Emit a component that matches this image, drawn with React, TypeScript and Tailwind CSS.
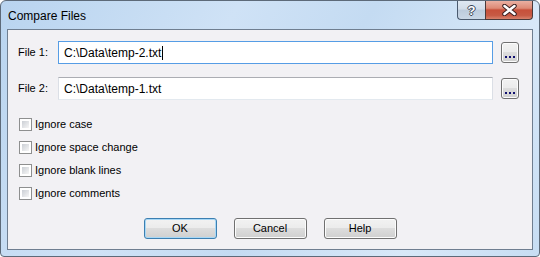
const font = { fontFamily: '"Liberation Sans", Arial, sans-serif' };

function BrowseButton() {
    return (
        <button className="w-[18px] h-[21px] rounded-[3px] border border-[#707070] bg-[linear-gradient(#f2f2f2_0%,#ebebeb_50%,#dddddd_50%,#cfcfcf_100%)] shadow-[inset_0_0_0_1px_#fcfcfc] flex items-end justify-center gap-[2px] pb-[4px]">
            <span className="w-[2px] h-[2px] bg-[#101070]" />
            <span className="w-[2px] h-[2px] bg-[#101070]" />
            <span className="w-[2px] h-[2px] bg-[#101070]" />
        </button>
    );
}

function FileRow({ label, value, focused }: { label: string; value: string; focused?: boolean }) {
    return (
        <div className="flex items-center h-[23px] pl-[10px]">
            <span className="w-[40px] text-[11px] text-black">{label}</span>
            <div
                className={`w-[435px] h-[23px] bg-white border flex items-center pl-[5px] text-[12px] text-black ${
                    focused
                        ? 'border-[#569de5]'
                        : 'border-[#dbdfe6] border-t-[#abadb3] border-b-[#e3e9ef]'
                }`}
            >
                <span>{value}</span>
                {focused && <span className="w-px h-[14px] bg-black ml-px" />}
            </div>
            <div className="ml-[8px]">
                <BrowseButton />
            </div>
        </div>
    );
}

function Check({ label }: { label: string }) {
    return (
        <div className="flex items-center h-[23px] pl-[11px]">
            <span className="w-[13px] h-[13px] border border-[#8e8f8f] bg-white p-[2px]">
                <span className="block w-full h-full bg-[linear-gradient(135deg,#cbcfd5,#f6f6f6)]" />
            </span>
            <span className="ml-[3px] text-[11px] text-black">{label}</span>
        </div>
    );
}

function DlgButton({ label, isDefault }: { label: string; isDefault?: boolean }) {
    return (
        <button
            className={`w-[73px] h-[21px] rounded-[3px] border text-[11px] text-black bg-[linear-gradient(#f2f2f2_0%,#ebebeb_50%,#dddddd_50%,#cfcfcf_100%)] ${
                isDefault
                    ? 'border-[#3c7fb1] shadow-[inset_0_0_0_1px_#a8d8f6]'
                    : 'border-[#707070] shadow-[inset_0_0_0_1px_#fcfcfc]'
            }`}
        >
            {label}
        </button>
    );
}

export default function App() {
    return (
        <div style={font} className="w-[540px] h-[257px] bg-white">
            <div className="w-[540px] h-[257px] rounded-t-[6px] rounded-b-[4px] border border-[#5d6a79] bg-[linear-gradient(120deg,#b9d4ef_0%,#cfe2f6_35%,#c4dbf2_55%,#d8e8f8_80%,#c7ddf3_100%)] flex flex-col overflow-hidden">
                {/* Title bar */}
                <div className="h-[28px] flex items-start shrink-0">
                    <span className="pl-[7px] pt-[6px] text-[12px] text-black">Compare Files</span>
                    <div className="ml-auto mr-[6px] flex">
                        <div className="w-[28px] h-[19px] rounded-bl-[4px] border border-t-0 border-r-0 border-[#4a5a6e] bg-[linear-gradient(#dfe8f2_0%,#d2dde9_45%,#bccbdc_50%,#c9d7e6_100%)] flex items-center justify-center">
                            <span className="text-[13px] font-bold text-white leading-none [text-shadow:1px_0_0_#3a4656,-1px_0_0_#3a4656,0_1px_0_#3a4656,0_-1px_0_#3a4656]">?</span>
                        </div>
                        <div className="w-[48px] h-[19px] rounded-br-[4px] border border-t-0 border-[#4a3a3a] bg-[linear-gradient(#eab0a2_0%,#de8a76_40%,#c7503a_50%,#c75a44_80%,#d8826c_100%)] flex items-center justify-center">
                            <svg width="15" height="12" viewBox="0 0 15 12">
                                <path d="M2.5 2 L12.5 10 M12.5 2 L2.5 10" stroke="#3a2020" strokeWidth="4.5" strokeLinecap="round" />
                                <path d="M2.5 2 L12.5 10 M12.5 2 L2.5 10" stroke="#ffffff" strokeWidth="2.5" strokeLinecap="round" />
                            </svg>
                        </div>
                    </div>
                </div>

                {/* Client area */}
                <div className="mx-[6px] h-[221px] border border-[#6f7e90] bg-[#f2f1f4] flex flex-col">
                    <div className="mt-[11px]">
                        <FileRow label="File 1:" value="C:\Data\temp-2.txt" focused />
                    </div>
                    <div className="mt-[13px]">
                        <FileRow label="File 2:" value="C:\Data\temp-1.txt" />
                    </div>
                    <div className="mt-[13px] flex flex-col">
                        <Check label="Ignore case" />
                        <Check label="Ignore space change" />
                        <Check label="Ignore blank lines" />
                        <Check label="Ignore comments" />
                    </div>
                    <div className="mt-[13px] flex justify-center gap-[17px]">
                        <DlgButton label="OK" isDefault />
                        <DlgButton label="Cancel" />
                        <DlgButton label="Help" />
                    </div>
                </div>
            </div>
        </div>
    );
}
